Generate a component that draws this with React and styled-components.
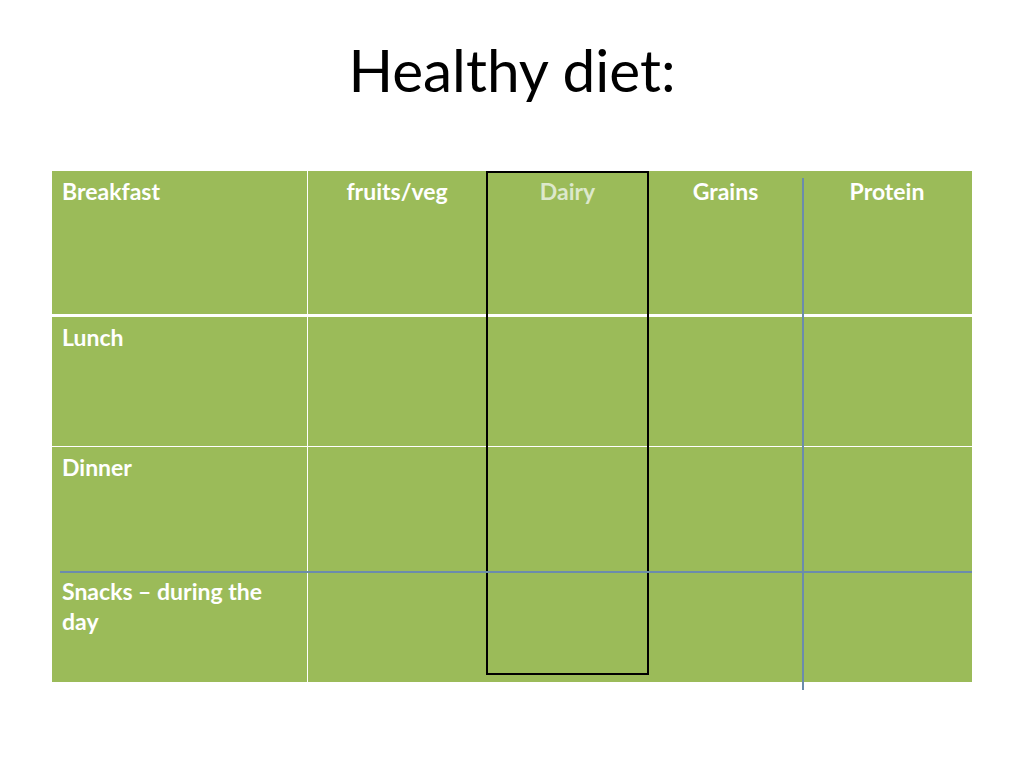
import React from "react";
import styled, { createGlobalStyle } from "styled-components";

const GlobalStyle = createGlobalStyle`
  html, body {
    margin: 0;
    padding: 0;
    background: #ffffff;
  }
`;

const Slide = styled.div`
  width: 1024px;
  height: 768px;
  background: #ffffff;
  font-family: "Lato", "Open Sans", sans-serif;
  display: flex;
  flex-direction: column;
  align-items: center;
  overflow: hidden;
`;

const Title = styled.h1`
  margin: 29px 0 0;
  height: 80px;
  font-size: 58.5px;
  font-weight: 400;
  line-height: 80px;
  color: #000000;
  text-align: center;
`;

const TableWrap = styled.div`
  position: relative;
  margin-top: 62px;
  width: 920px;
  align-self: flex-start;
  margin-left: 52px;
`;

const Table = styled.div`
  display: flex;
  flex-direction: column;
  background: #9bbb59;
`;

const Row = styled.div`
  display: flex;
  height: ${(p) => p.h}px;
  border-bottom: ${(p) => p.sep || 0}px solid #ffffff;
`;

const Cell = styled.div`
  width: ${(p) => p.w}px;
  box-sizing: border-box;
  padding: 5px 10px 0;
  border-left: ${(p) => (p.divider ? "1.5px solid #ffffff" : "none")};
  font-size: 23px;
  font-weight: 700;
  line-height: 30px;
  color: ${(p) => (p.pale ? "#dde8cc" : "#ffffff")};
  text-align: ${(p) => (p.left ? "left" : "center")};
`;

const DairyBox = styled.div`
  position: absolute;
  left: 434px;
  top: 0;
  width: 163px;
  height: 504px;
  box-sizing: border-box;
  border: 2px solid #000000;
  pointer-events: none;
`;

const GuideV = styled.div`
  position: absolute;
  left: 750px;
  top: 7px;
  width: 1.5px;
  height: 512px;
  background: #6b8cab;
`;

const GuideH = styled.div`
  position: absolute;
  left: 8px;
  top: 400px;
  width: 912px;
  height: 1.5px;
  background: #6b8cab;
`;

const widths = [255, 179, 163, 153, 170];

const rows = [
  { h: 143, sep: 3, cells: ["Breakfast", "fruits/veg", "Dairy", "Grains", "Protein"] },
  { h: 129, sep: 1, cells: ["Lunch", "", "", "", ""] },
  { h: 124, sep: 0, cells: ["Dinner", "", "", "", ""] },
  { h: 111, sep: 0, cells: ["Snacks \u2013 during the day", "", "", "", ""] },
];

export default function App() {
  return (
    <>
      <GlobalStyle />
      <Slide>
        <Title>Healthy diet:</Title>
        <TableWrap>
          <Table>
            {rows.map((r, i) => (
              <Row key={i} h={r.h} sep={r.sep}>
                {r.cells.map((c, j) => (
                  <Cell
                    key={j}
                    w={widths[j]}
                    left={j === 0}
                    divider={j === 1}
                    pale={i === 0 && j === 2}
                  >
                    {c}
                  </Cell>
                ))}
              </Row>
            ))}
          </Table>
          <DairyBox />
          <GuideV />
          <GuideH />
        </TableWrap>
      </Slide>
    </>
  );
}
